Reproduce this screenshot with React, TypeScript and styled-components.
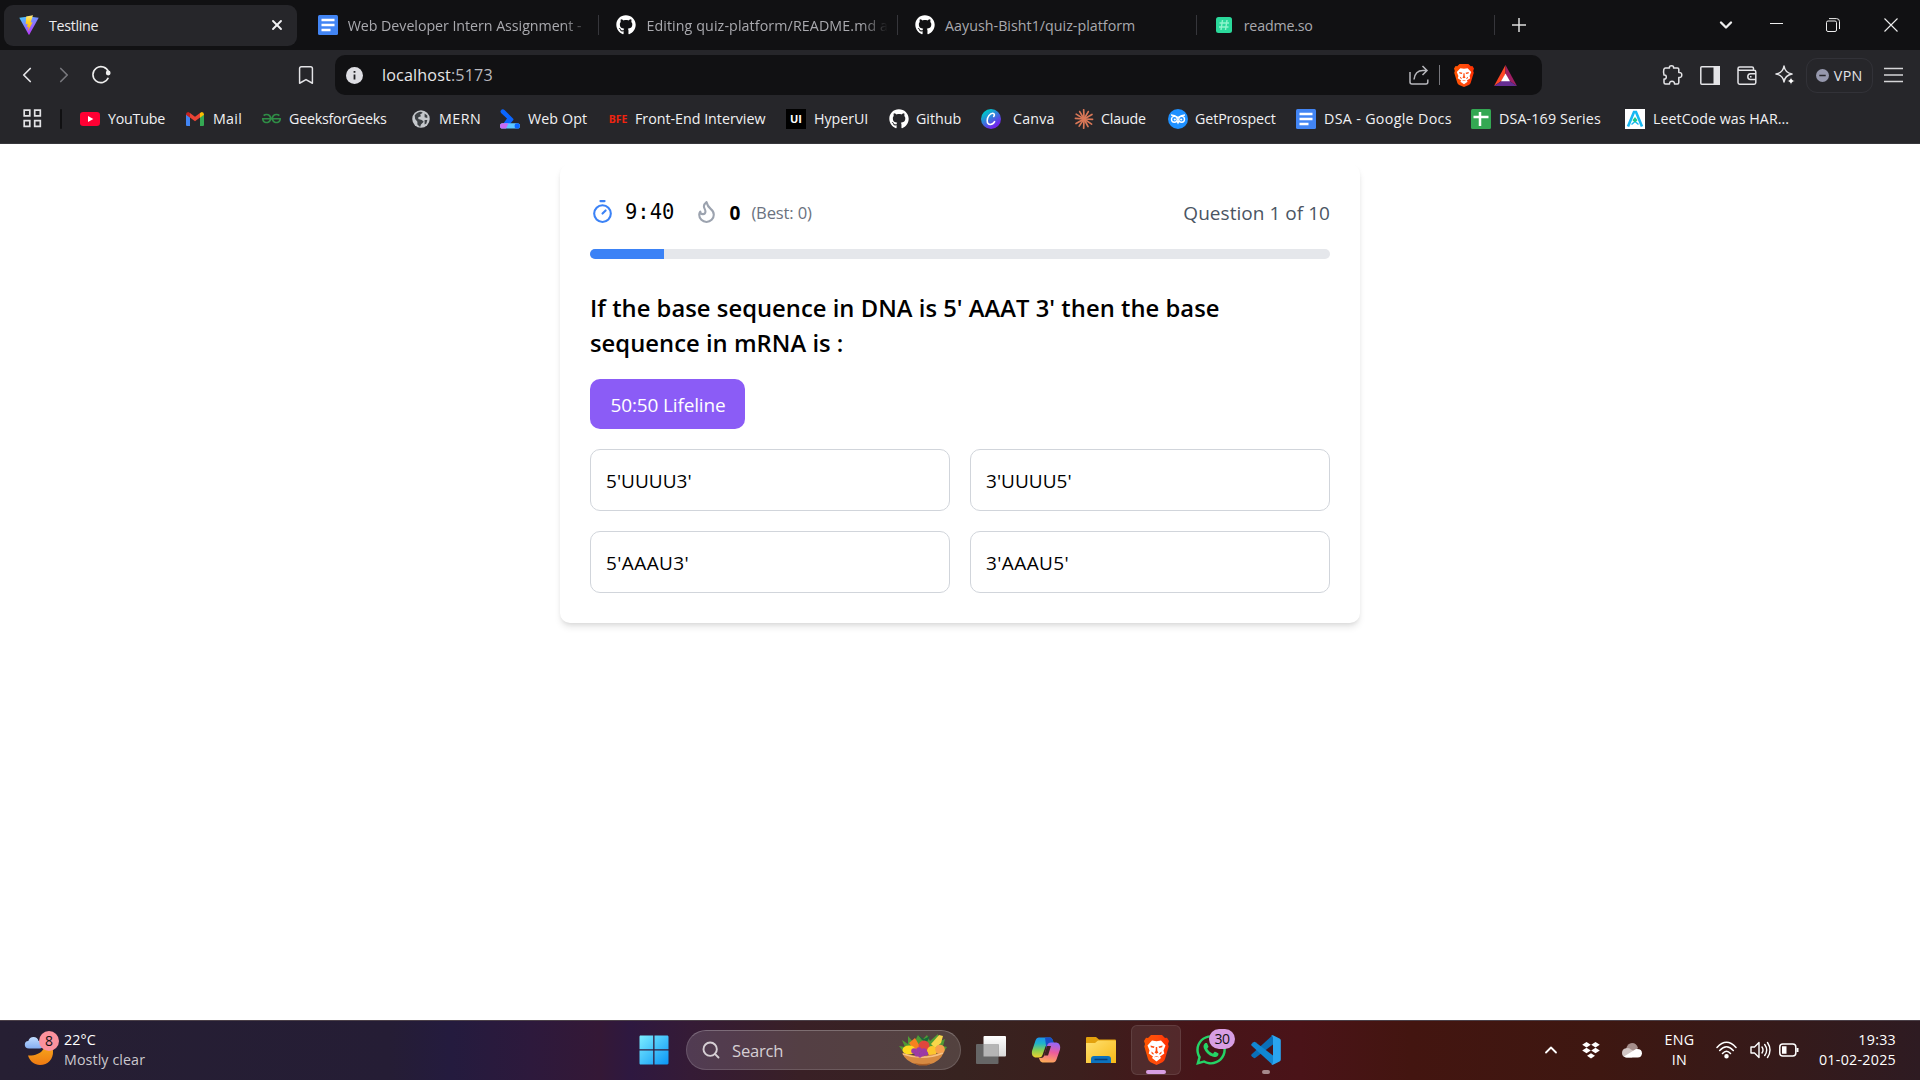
import React from 'react';
import styled, { createGlobalStyle } from 'styled-components';
import { Timer, Flame, Bookmark as BookmarkIcon, ChevronLeft, ChevronRight, ChevronUp, ChevronDown, Search, X } from 'lucide-react';
import { FaGithub, FaWhatsapp } from 'react-icons/fa';
import { SiGeeksforgeeks } from 'react-icons/si';

const GlobalStyle = createGlobalStyle`
  * { box-sizing: border-box; }
  body { margin: 0; background: #fff; overflow: hidden; font-family: "Open Sans", "Noto Sans", sans-serif; }
`;

const Screen = styled.div`
  width: 1920px;
  height: 1080px;
  display: flex;
  flex-direction: column;
`;

/* ---------- Browser tabs ---------- */
const TabStrip = styled.div`
  height: 50px;
  background: #111113;
  display: flex;
  align-items: center;
`;
const TabCell = styled.div`
  width: 298.7px;
  flex: none;
  height: 50px;
  padding: 5px 0 5px 4px;
  display: flex;
  align-items: center;
`;
const TabBody = styled.div<{ $active?: boolean }>`
  flex: none;
  width: 293px;
  height: 41px;
  border-radius: 9px;
  background: ${p => (p.$active ? '#26262a' : 'transparent')};
  display: flex;
  align-items: center;
  padding-left: 15px;
`;
const TabTitle = styled.div<{ $active?: boolean; $track: number; $fade?: boolean }>`
  width: ${p => (p.$active ? 220 : 242)}px;
  margin-left: 10px;
  padding-top: 1px;
  white-space: nowrap;
  font-size: 14.25px;
  line-height: 24px;
  letter-spacing: ${p => p.$track}px;
  color: ${p => (p.$active ? '#ececee' : '#a9a9ae')};
  ${p => p.$fade && 'mask-image: linear-gradient(90deg, #000 215px, transparent 242px);'}
`;
const TabRule = styled.div<{ $hidden?: boolean }>`
  flex: none;
  width: 1px;
  height: 20px;
  margin-left: 2.5px;
  background: ${p => (p.$hidden ? 'transparent' : '#36363b')};
`;
const WindowControls = styled.div`
  flex: 1;
  display: grid;
  grid-template-columns: 51px 156px 51px 52px 59px 57px;
  align-items: center;
  justify-items: center;
  color: #eee;
  svg { display: block; }
`;

/* ---------- Toolbar ---------- */
const Toolbar = styled.div`
  height: 50px;
  background: #26262a;
  display: flex;
  align-items: center;
  color: #e4e4e7;
`;
const NavButtons = styled.div`
  width: 335px;
  flex: none;
  display: grid;
  grid-template-columns: 37px 37px 37px 1fr 22px 18px;
  padding-left: 8px;
  align-items: center;
  justify-items: center;
`;
const AddressBar = styled.div`
  width: 1207px;
  flex: none;
  height: 40px;
  border-radius: 10px;
  background: #111113;
  display: flex;
  align-items: center;
  padding: 0 25px 0 11px;
`;
const Address = styled.div`
  flex: 1;
  margin-left: 19px;
  font-size: 16.15px;
  letter-spacing: 0.15px;
  color: #e6e6e8;
  span { color: #b9b9be; }
`;
const AddressRule = styled.div`
  width: 1px;
  height: 20px;
  margin: 0 14px 0 10px;
  background: #77777c;
`;
const ShieldGap = styled.div`
  width: 20px;
`;
const Extensions = styled.div`
  flex: 1;
  display: flex;
  align-items: center;
  padding-left: 120px;
`;
const ExtensionSlot = styled.div`
  width: 37.7px;
  display: flex;
  svg { display: block; }
`;
const VpnButton = styled.div`
  width: 67px;
  height: 35px;
  margin: 0 11px 0 -7px;
  border: 1px solid #323238;
  border-radius: 11px;
  display: flex;
  align-items: center;
  gap: 5px;
  padding-left: 9px;
  font-size: 14.25px;
  letter-spacing: 0.4px;
`;

/* ---------- Bookmarks ---------- */
const BookmarkBar = styled.div`
  height: 44px;
  background: #26262a;
  border-bottom: 1px solid #36363b;
  display: flex;
  align-items: center;
  padding: 0 0 6px 23px;
`;
const BookmarkRule = styled.div`
  width: 2px;
  height: 20px;
  margin: 0 18px;
  border-radius: 1px;
  background: #101012;
`;
const BookmarkItem = styled.div<{ $width: number; $gap?: number; $track: number }>`
  width: ${p => p.$width}px;
  flex: none;
  display: flex;
  align-items: center;
  gap: ${p => p.$gap ?? 7}px;
  font-size: 14.25px;
  line-height: 24px;
  letter-spacing: ${p => p.$track}px;
  white-space: nowrap;
  color: #f1f1f3;
`;
const IconBox = styled.div`
  width: 20px;
  height: 20px;
  flex: none;
  display: flex;
  align-items: center;
  justify-content: center;
  color: #fff;
`;
const TextMark = styled.div<{ $bg: string; $fg: string; $size: number }>`
  width: 20px;
  height: 20px;
  flex: none;
  display: flex;
  align-items: center;
  justify-content: center;
  background: ${p => p.$bg};
  color: ${p => p.$fg};
  font: 700 ${p => p.$size}px/20px "Open Sans", sans-serif;
  letter-spacing: 0;
`;

/* ---------- Quiz page ---------- */
const Page = styled.main`
  flex: 1;
  background: #fff;
  padding-top: 20px;
  display: flex;
  justify-content: center;
  align-items: flex-start;
`;
const Card = styled.section`
  width: 800px;
  padding: 30px;
  border-radius: 10px;
  background: #fff;
  box-shadow: 0 5px 7.5px -1.25px rgba(0, 0, 0, 0.1), 0 2.5px 5px -2.5px rgba(0, 0, 0, 0.1);
`;
const CardHeader = styled.div`
  height: 35px;
  display: flex;
  justify-content: space-between;
  align-items: center;
`;
const Stats = styled.div`
  display: flex;
  gap: 19px;
`;
const Stat = styled.div`
  display: flex;
  align-items: center;
  gap: 10px;
`;
const Clock = styled.span`
  width: 49.5px;
  font: 20.5px/28px "DejaVu Sans Mono", monospace;
  color: #000;
`;
const Streak = styled.span`
  padding: 2px 0 0 1px;
  font-size: 19px;
  line-height: 30px;
  font-weight: 700;
`;
const Best = styled.span`
  padding: 2px 0 0 1px;
  font-size: 16.6px;
  line-height: 25px;
  letter-spacing: -0.16px;
  color: #6b7280;
`;
const Counter = styled.span`
  padding-top: 2px;
  font-size: 19px;
  line-height: 30px;
  letter-spacing: 0.04px;
  color: #4b5563;
`;
const Progress = styled.div`
  height: 10px;
  margin: 20px 0 30px;
  border-radius: 5px;
  background: #e5e7eb;
  overflow: hidden;
`;
const ProgressFill = styled.div`
  width: 10%;
  height: 100%;
  background: #3b82f6;
`;
const Question = styled.h2`
  margin: 0 0 18px;
  padding-top: 2px;
  font-size: 23.75px;
  line-height: 35px;
  font-weight: 600;
  letter-spacing: 0.04px;
  color: #000;
`;
const Lifeline = styled.button`
  width: 155px;
  height: 50px;
  margin-bottom: 20px;
  padding: 2px 0 0 1px;
  display: block;
  border: 0;
  border-radius: 10px;
  background: #8b5cf6;
  color: #fff;
  font: 19px/30px "Open Sans", sans-serif;
  letter-spacing: -0.14px;
`;
const Options = styled.div`
  display: grid;
  grid-template-columns: 1fr 1fr;
  gap: 20px;
`;
const Option = styled.button<{ $track: number }>`
  height: 62px;
  padding: 2px 15px 0;
  border: 1px solid #d1d5db;
  border-radius: 10px;
  background: #fff;
  color: #000;
  text-align: left;
  font: 19px/30px "Open Sans", sans-serif;
  letter-spacing: ${p => p.$track}px;
`;

/* ---------- Taskbar ---------- */
const Taskbar = styled.footer`
  height: 60px;
  padding-bottom: 1px;
  border-top: 1px solid #4b4048;
  background: linear-gradient(90deg, #261f33 0, #251d35 390px, #241b3e 450px, #2d193c 530px, #341836 600px, #2e1840 630px, #351b36 690px, #392026 800px, #372320 960px, #3c1f1d 1080px, #471519 1200px, #4a1318 1300px, #431510 1410px, #3e1711 1600px, #351a1a 1780px, #2e1b22 1920px);
  display: grid;
  grid-template-columns: 629px 1fr auto;
  align-items: center;
`;
const Weather = styled.div`
  display: flex;
  align-items: center;
  padding-left: 24px;
  gap: 4px;
`;
const TwoLines = styled.div<{ $align?: string; $track?: number; $muted?: boolean }>`
  display: flex;
  flex-direction: column;
  padding-bottom: 1px;
  font-size: 14.25px;
  line-height: 20px;
  letter-spacing: ${p => p.$track ?? 0}px;
  text-align: ${p => p.$align ?? 'left'};
  color: #fff;
  span:last-child { color: ${p => (p.$muted ? '#cbc8ce' : '#fff')}; }
`;
const Apps = styled.div`
  display: flex;
  align-items: center;
`;
const AppSlot = styled.div<{ $active?: boolean }>`
  position: relative;
  width: 50px;
  height: 50px;
  margin-right: 5px;
  border-radius: 6px;
  border: 1px solid ${p => (p.$active ? 'rgba(255,255,255,.09)' : 'transparent')};
  background: ${p => (p.$active ? 'rgba(255,255,255,.08)' : 'transparent')};
  display: flex;
  align-items: center;
  justify-content: center;
`;
const RunningMark = styled.i<{ $wide?: boolean }>`
  position: absolute;
  bottom: 0;
  width: ${p => (p.$wide ? 20 : 8)}px;
  height: 4px;
  border-radius: 2px;
  background: ${p => (p.$wide ? '#d89ee3' : '#a6898c')};
`;
const CountBadge = styled.b`
  position: absolute;
  left: 22px;
  top: 3px;
  width: 26px;
  height: 20px;
  border-radius: 10px;
  background: #d89ee3;
  color: #111;
  font: 14px/20px "Open Sans", sans-serif;
  letter-spacing: -0.6px;
  text-align: center;
`;
const SearchBox = styled.div`
  width: 275px;
  height: 40px;
  margin: 0 5px 0 2px;
  padding: 0 12px 0 14px;
  border-radius: 20px;
  border: 1px solid rgba(255, 255, 255, 0.14);
  border-top-color: rgba(255, 255, 255, 0.24);
  background: rgba(255, 255, 255, 0.14);
  display: flex;
  align-items: center;
  color: #d6cfd4;
  font-size: 16.6px;
  letter-spacing: -0.22px;
`;
const SearchText = styled.span`
  flex: 1;
  margin-left: 11px;
`;
const Tray = styled.div`
  display: grid;
  grid-template-columns: 40px 40px 41px 55px 39px 28px 30px 92px;
  align-items: center;
  justify-items: center;
  padding-right: 24px;
  color: #fff;
  svg { display: block; }
`;
const ClockText = styled.div`
  justify-self: end;
`;

/* ---------- Icons ---------- */
const ViteIcon = () => (
  <svg width="20" height="20" viewBox="0 0 20 20">
    <defs>
      <linearGradient id="vg" x1="0" y1="0" x2=".5" y2="1"><stop stopColor="#41d1ff" /><stop offset="1" stopColor="#bd34fe" /></linearGradient>
      <linearGradient id="vy" x1="0" y1="0" x2="0" y2="1"><stop stopColor="#ffea83" /><stop offset=".4" stopColor="#ffd020" /><stop offset="1" stopColor="#ffa800" /></linearGradient>
    </defs>
    <path d="M.3 2.7 9.8 1.6 19.7 2.7 10.4 19.6Q10 20.2 9.6 19.6Z" fill="url(#vg)" />
    <path d="M14 .2 7.2 1.5 6.7 9.2 8.7 8.8 8 12.2 9.7 11.8 8.8 16.5 13.6 7.2 11.6 7.5Z" fill="url(#vy)" />
  </svg>
);
const DocsIcon = () => (
  <svg width="20" height="20" viewBox="0 0 20 20"><rect width="20" height="20" rx="1.5" fill="#4285f4" /><path d="M3.5 5h13M3.5 10h13M3.5 15h9" stroke="#fff" strokeWidth="2.4" /></svg>
);
const SheetsIcon = () => (
  <svg width="20" height="20" viewBox="0 0 20 20"><rect width="20" height="20" rx="1.5" fill="#34a853" /><path d="M2.5 8h15M9 3v14" stroke="#fff" strokeWidth="2.5" /></svg>
);
const ReadmeIcon = () => (
  <svg width="16" height="16" viewBox="0 0 16 16"><rect width="16" height="16" rx="2.5" fill="#2bd99b" /><path d="M6.5 3 5 13M11 3 9.5 13M3.5 6H13M3 10h9.5" stroke="#8ff5cd" strokeWidth="1.4" /></svg>
);
const YoutubeIcon = () => (
  <svg width="20" height="20" viewBox="0 0 20 20"><rect y="3" width="20" height="14" rx="3.2" fill="#ff0033" /><path d="m8 7 5.3 3L8 13Z" fill="#fff" /></svg>
);
const MailIcon = () => (
  <svg width="20" height="20" viewBox="0 0 20 20">
    <path d="M1 5v11q0 1 1 1h3V8Z" fill="#4285f4" /><path d="M19 5v11q0 1-1 1h-3V8Z" fill="#34a853" />
    <path d="M5 8.500V4l5 3.800L15 4v4.500l-5 3.800Z" fill="#ea4335" /><path d="M1 5.500Q1 3 3.200 3L5 4v4.700L1 5.800Z" fill="#c5221f" /><path d="M19 5.500Q19 3 16.800 3L15 4v4.700l4-2.900Z" fill="#fbbc04" />
  </svg>
);
const GlobeIcon = () => (
  <svg width="18" height="18" viewBox="0 0 20 20"><circle cx="10" cy="10" r="9.7" fill="#c4c7cb" /><path d="M3 6q3-4 7-4l2 1-3 2 1 2-3 1v2l4 1 2 2-3 3-1 3-3-3V13L3.500 10ZM14 4l3 2v3l-3-1ZM14 11l3 0-1 4-2 1Z" fill="#3c4044" /></svg>
);
const WebOptIcon = () => (
  <svg width="20" height="20" viewBox="0 0 20 20"><path d="M.8 1.500Q2.500-1 4.800 1.200L13 9.500q1 1 0 2L10 15H3l4-5.500L1.300 4.300Q0 3 .8 1.500Z" fill="#0b66ff" /><rect x="0" y="14.300" width="20" height="5.200" rx="2.600" fill="#5ec8ff" /><path d="M2.500 14.300h6l-2.500 5.200H2.500Q0 19.500 0 16.900t2.500-2.600Z" fill="#c86af5" /><circle cx="17.200" cy="16.900" r="2.600" fill="#0b66ff" /></svg>
);
const CanvaIcon = () => (
  <svg width="20" height="20" viewBox="0 0 20 20"><defs><linearGradient id="cv" x1=".1" y1="0" x2=".8" y2="1"><stop offset=".15" stopColor="#00c4cc" /><stop offset=".85" stopColor="#7027eb" /></linearGradient></defs><circle cx="10" cy="10" r="10" fill="url(#cv)" /><path d="M12.700 7.500c1.300-1.600.6-3.200-1-3.200-2.800 0-5.500 3.800-5.500 7.200 0 2.600 1.300 4 3.100 4 2 0 3.400-1.300 4.300-2.900" fill="none" stroke="#fff" strokeWidth="1.600" strokeLinecap="round" /></svg>
);
const ClaudeIcon = () => (
  <svg width="20" height="20" viewBox="-10 -10 20 20">
    {[2, 34, 62, 92, 124, 150, 184, 212, 240, 268, 300, 330].map((a, i) => <path key={a} d={`M0 0H${i % 2 ? 9.2 : 8.6}`} transform={`rotate(${a})`} stroke="#d97757" strokeWidth="1.7" strokeLinecap="round" />)}
  </svg>
);
const ProspectIcon = () => (
  <svg width="20" height="20" viewBox="0 0 20 20"><circle cx="10" cy="10" r="10" fill="#1e90ff" /><g fill="none" stroke="#fff" strokeWidth="1.400"><circle cx="6.400" cy="10.300" r="2.900" /><circle cx="13.600" cy="10.300" r="2.900" /><path d="M3 6q3.500 0 7 2.500Q13.500 6 17 6M9 12l1 2 1-2" /></g><circle cx="6.800" cy="10.500" r="1.100" fill="#fff" /><circle cx="13.200" cy="10.500" r="1.100" fill="#fff" /></svg>
);
const AlgoIcon = () => (
  <svg width="20" height="20" viewBox="0 0 20 20"><rect width="20" height="20" fill="#fff" /><path d="M3 17.500 9 3h2l6 14.500" fill="none" stroke="#16b8f3" strokeWidth="2.600" /><path d="m6.500 15.500 3.500-3 3.500 3" fill="none" stroke="#16b8f3" strokeWidth="1.400" /><path d="m10 8 2.500 3.200L10 13.500l-2.500-2.300Z" fill="#18c98b" /></svg>
);
const AppsIcon = () => (
  <svg width="19" height="19" viewBox="0 0 19 19" fill="none" stroke="#e2e2e5" strokeWidth="1.700"><path d="M1.200 1.200h5.600v5.600H1.200ZM11.700 1.200h5.600v5.600h-5.600ZM1.200 11.700h5.600v5.600H1.200ZM11.700 11.700h5.600v5.600h-5.600Z" /></svg>
);
const ReloadIcon = () => (
  <svg width="20" height="20" viewBox="0 0 20 20"><path d="M17.300 12.800A8 8 0 1 1 17.500 7" fill="none" stroke="#eee" strokeWidth="1.600" /><circle cx="17.200" cy="8" r="2.400" fill="#eee" /></svg>
);
const InfoIcon = () => (
  <svg width="17" height="17" viewBox="0 0 17 17"><circle cx="8.500" cy="8.500" r="8.500" fill="#dedee3" /><path d="M8.500 7.500v5M8.500 4v1.700" stroke="#202024" strokeWidth="1.800" /></svg>
);
const ShareIcon = () => (
  <svg width="20" height="20" viewBox="0 0 20 20" fill="none" stroke="#b7b7bc" strokeWidth="1.500"><path d="M1 7v10q0 2 2 2h14q1.800 0 1.800-2v-2.500M5 14.500Q6 5.500 14 5.500h3.500M13.500 1l4.500 4.500-4.500 4.500" /></svg>
);
const LionWrap = styled.div<{ $w: number; $h: number }>`
  width: ${p => p.$w}px;
  height: ${p => p.$h}px;
  svg { width: 100%; height: 100%; display: block; }
`;
const Lion = ({ w, h }: { w: number; h: number }) => (
  <LionWrap $w={w} $h={h}>
    <svg viewBox="0 0 25 30" preserveAspectRatio="none">
      <defs><linearGradient id="br" x1="0" x2="1"><stop stopColor="#ff5500" /><stop offset=".55" stopColor="#ff4a0d" /><stop offset="1" stopColor="#ff2d00" /></linearGradient></defs>
      <path d="M7 0h11l3 3 2-.3 2 3.300-1 3 .7 2.500L21 24q-.5 2-2.500 3.300L12.500 30l-6-2.700Q4.500 26 4 24L.3 11.500 1 9 0 6l2-3.300L4 3Z" fill="url(#br)" />
      <path d="M8 5.500 12.500 6.200 17 5.500 21.500 10.500 19.500 15.500l.8 3-4.300 3 1 1.500-4.500 3.500L8 23l1-1.500-4.300-3 .8-3L3.500 10.500Z" fill="#fff" />
      <path d="m6.500 10.500 4 1-.7 1.400-3-.6ZM18.500 10.500l-4 1 .7 1.400 3-.6ZM11.800 12h1.400l.2 4 1 1.500-1.900 1.200-1.900-1.200 1-1.500ZM7.500 16.500l2.300 2-.5 1.200-1.800-1.500ZM17.500 16.500l-2.300 2 .5 1.200 1.800-1.500ZM9.700 22.200l2.800-1.300 2.800 1.300-2.800-.4Z" fill="#ff4a0d" />
    </svg>
  </LionWrap>
);
const BatIcon = () => (
  <svg width="23" height="21" viewBox="0 0 23 21"><path d="M11.500 0 0 21l7.500-5L11.500 9Z" fill="#ff4724" /><path d="M11.500 0 23 21l-7.500-5-4-7Z" fill="#9e1f63" /><path d="M0 21h23l-7.500-5h-8Z" fill="#662d91" /><path d="m11.500 8.500 4.500 7.700H7Z" fill="#fff" /></svg>
);
const PuzzleIcon = () => (
  <svg width="21" height="20" viewBox="0 0 21 20" fill="none" stroke="#e4e4e7" strokeWidth="1.500" strokeLinejoin="round"><path d="M3.500 3h4q-.5-2.200 2-2.200T11.500 3h4q1.300 0 1.300 1.300v3.200q3-.2 3 2.500t-3 2.500v5q0 1.500-1.300 1.500h-3q.2-2.800-2.500-2.800T7.500 19h-4q-1.500 0-1.500-1.500V14q2.300.2 2.300-2T2 10q-.8-3.200-.2-5.500Q2.200 3 3.500 3Z" /></svg>
);
const PanelIcon = () => (
  <svg width="20" height="19" viewBox="0 0 20 19"><rect x=".8" y=".8" width="18.400" height="17.400" rx="1" fill="none" stroke="#e4e4e7" strokeWidth="1.500" /><path d="M13.500 0H20v19h-6.500Z" fill="#e4e4e7" /></svg>
);
const WalletIcon = () => (
  <svg width="20" height="19" viewBox="0 0 20 19" fill="none" stroke="#e4e4e7" strokeWidth="1.500"><path d="M1 2.800v13.700q0 1.700 1.700 1.700h14.500q1.600 0 1.600-1.700V6q0-1.700-1.600-1.700H2.500Q1 4.300 1 2.500 1 1 2.700 1H15q1.500 0 1.500 1.500v1.700M19 7.800h-5.500Q10.800 8 10.800 10.700t2.700 2.800H19M13 10.700h1.500" /></svg>
);
const SparkleIcon = () => (
  <svg width="20" height="20" viewBox="0 0 20 20"><path d="M9 1q1 6.800 8 8-7 1.200-8 8-1-6.800-8-8 7-1.200 8-8Z" fill="none" stroke="#e4e4e7" strokeWidth="1.500" strokeLinejoin="round" /><path d="M16 12q.5 3.400 4 4-3.500.6-4 4-.5-3.400-4-4 3.500-.6 4-4Z" fill="#fff" stroke="#26262a" strokeWidth=".6" /></svg>
);
const VpnDot = () => (
  <svg width="13" height="13" viewBox="0 0 13 13"><circle cx="6.500" cy="6.500" r="6.500" fill="#9698ad" /><path d="M3.300 6.500h6.400" stroke="#26262a" strokeWidth="1.500" /></svg>
);
const MenuIcon = () => (
  <svg width="19" height="16" viewBox="0 0 19 16"><path d="M0 1.500h19M0 8h19M0 14.500h19" stroke="#d5d5d8" strokeWidth="1.600" /></svg>
);
const PlusIcon = () => <svg width="14" height="14" viewBox="0 0 14 14"><path d="M7 0v14M0 7h14" stroke="#ddd" strokeWidth="1.500" /></svg>;
const MinimizeIcon = () => <svg width="14" height="14" viewBox="0 0 14 14"><path d="M0 5.500h13" stroke="#eee" /></svg>;
const RestoreIcon = () => <svg width="14" height="14" viewBox="0 0 14 14" fill="none" stroke="#eee"><rect x=".5" y="3" width="10" height="10.500" rx="1.500" /><path d="M3 .6h7.500q3 0 3 3V11" /></svg>;
const CloseIcon = () => <svg width="14" height="14" viewBox="0 0 14 14"><path d="m.5.5 13 13M13.500.5l-13 13" stroke="#eee" strokeWidth="1.100" /></svg>;

const WeatherArt = styled.div`
  position: relative;
  height: 36px;
  svg { display: block; }
`;
const AlertBadge = styled.b`
  position: absolute;
  left: 15px;
  top: -1px;
  width: 20px;
  height: 20px;
  border-radius: 10px;
  background: #fb929d;
  color: #111;
  font: 14px/20px "Open Sans", sans-serif;
  text-align: center;
`;
const WeatherIcon = () => (
  <WeatherArt>
    <svg width="36" height="36" viewBox="0 0 36 36">
      <defs><linearGradient id="mn" x1="0" y1="0" x2="0" y2="1"><stop stopColor="#f8b51f" /><stop offset="1" stopColor="#ef7a12" /></linearGradient><linearGradient id="cl" x1="0" y1="0" x2="0" y2="1"><stop stopColor="#c0dcff" /><stop offset="1" stopColor="#85aef2" /></linearGradient></defs>
      <path d="M20 8c3 7-2 16-16 15.500C6 29.500 10.500 33 16 33c8 0 13.500-6 13-14C28.500 12 25 9 20 8Z" fill="url(#mn)" />
      <path d="M5 16.500q-4.200-.3-4.200-3.800t3.500-3.700Q5.500 5 9.500 5t5 4q4.500-.2 4.500 3.800t-4 3.700Z" fill="url(#cl)" />
    </svg>
    <AlertBadge>8</AlertBadge>
  </WeatherArt>
);
const WindowsIcon = () => (
  <svg width="30" height="30" viewBox="0 0 30 30"><defs><linearGradient id="wn" x1="0" y1="0" x2="1" y2="1"><stop stopColor="#7ceeff" /><stop offset="1" stopColor="#0a95f5" /></linearGradient></defs><path d="M1 .5h13.200v13.700H.5V1.500ZM15.500.5h13.200l.8 1v12.700h-14ZM.5 15.500h13.700v14H1l-.5-1ZM15.500 15.500h14v13l-1 1h-13Z" fill="url(#wn)" /></svg>
);
const BasketIcon = () => (
  <svg width="50" height="32" viewBox="0 0 50 32">
    <path d="M1 12l6 1L4 6l6 4 0-8 6 7 4-8 4 5 5-5 3 6 8-7 0 8 7-3-2 7 4 1-4 6-38 1Z" fill="#4f9a35" />
    <path d="M20 1l6 4 6-3-4 8Z" fill="#17693a" /><path d="M11 9l6-5 7 12-5 4Z" fill="#f58220" />
    <path d="M33 10l8-9 4 1-2 7-6 5Z" fill="#f7d64a" />
    <circle cx="26" cy="12" r="5.500" fill="#e0473c" /><ellipse cx="11" cy="16" rx="6.500" ry="4.500" fill="#ffd91f" /><circle cx="34" cy="17" r="5" fill="#fcc52d" /><circle cx="42" cy="15.500" r="4.800" fill="#f6a04c" />
    <path d="M4 19q17 6 42-1-4 10-15 12.500H19Q8 28 4 19Z" fill="#d78a42" /><path d="M5 20q20 7 40-1" stroke="#f6c184" strokeWidth="1.600" fill="none" />
    <g fill="#9d3aa5"><circle cx="16" cy="17" r="2.800" /><circle cx="21" cy="16" r="2.800" /><circle cx="26" cy="17" r="2.800" /><circle cx="19" cy="20" r="2.600" /><circle cx="24" cy="20" r="2.600" /><circle cx="28" cy="19.500" r="2.200" /><circle cx="22" cy="22" r="1.800" /></g>
    <path d="M16 29q9 2 17 0l-4 2.500h-8Z" fill="#a95e26" />
  </svg>
);
const TaskViewIcon = () => (
  <svg width="30" height="30" viewBox="0 0 30 30"><defs><linearGradient id="tv" x1="0" y1="0" x2="0" y2="1"><stop stopColor="#fff" /><stop offset="1" stopColor="#d9d9d9" /></linearGradient></defs><rect x="7.500" y="1" width="22.500" height="20.500" rx="1" fill="url(#tv)" /><rect y="9" width="22.500" height="20" rx="1" fill="#666" /><path d="M7.500 9h15v12.500h-15Z" fill="#b5b5b5" /></svg>
);
const CopilotIcon = () => (
  <svg width="30" height="30" viewBox="0 0 30 30">
    <defs>
      <linearGradient id="c1" x1="0" y1="0" x2="0" y2="1"><stop stopColor="#1b93ee" /><stop offset=".3" stopColor="#21b3c8" /><stop offset=".65" stopColor="#8bcf4f" /><stop offset="1" stopColor="#f2d12f" /></linearGradient>
      <linearGradient id="c2" x1=".5" y1="0" x2=".3" y2="1"><stop stopColor="#9a66f5" /><stop offset=".45" stopColor="#ec5c9c" /><stop offset="1" stopColor="#ffae55" /></linearGradient>
    </defs>
    <path d="M8 2.500h11q2.200.3 3.200 4l1.300 4h-5l-3.800.5-3.200 9q-1 3-3.700 2.500H4Q0 21 1 16L4.500 5.500Q5.500 2.500 8 2.500Z" fill="url(#c1)" />
    <path d="M14 2.500h5q2.200.3 3.200 4l1.300 4h-5q-2.500-.2-3.300 2Z" fill="#194fc9" />
    <path d="M22 27.500H11.500Q9 27 8 23h2q2.500 0 3-2l3.500-11.500Q17.300 7.500 20 7.500h5.500q4.500 1 3.500 7l-3.500 10q-1 3-3.500 3Z" fill="url(#c2)" />
    <path d="M13 20.500h4l3-9.500h-4Z" fill="#3e2021" />
  </svg>
);
const FolderIcon = () => (
  <svg width="30" height="30" viewBox="0 0 30 30"><defs><linearGradient id="fo" x1="0" y1="0" x2="1" y2="1"><stop stopColor="#ffe070" /><stop offset="1" stopColor="#f7b916" /></linearGradient></defs><path d="M0 8V3q0-1 1-1h9l3 2.500h16q1 0 1 1V10H0Z" fill="#e3a10d" /><path d="M0 8h9l3-2.500h17q1 0 1 1V28H0Z" fill="url(#fo)" /><path d="M5 28v-4q0-3 3-3h14q3 0 3 3v4Z" fill="#0d72bd" /><path d="M8.500 24.500h13" stroke="#063e78" strokeWidth="1.500" /></svg>
);
const CodeIcon = () => (
  <svg width="30" height="30" viewBox="0 0 30 30"><path d="M22 .5v9L4.500 22.800q-1 .7-2 0L.7 21.200q-1-1 0-2L21 .8Z" fill="#0a6fb8" /><path d="M22 29.500v-9L4.500 7.200q-1-.7-2 0L.7 8.800q-1 1 0 2L21 29.200Z" fill="#1187d2" /><path d="M22 .3 28.500 3.500q1.300.7 1.300 2v19q0 1.300-1.300 2L22 29.700q-1 .4-2-.6 2 .6 2-2V3q0-2.500-2-2 1-1 2-.7Z" fill="#2aa5f0" /></svg>
);
const DropboxIcon = () => (
  <svg width="18" height="17" viewBox="0 0 18 17" fill="#fff"><path d="m4.500 0 4.300 2.700-4.300 2.800L.2 2.700ZM13.500 0l4.300 2.700-4.300 2.800-4.300-2.800ZM4.500 5.800l4.300 2.700-4.300 2.800L.2 8.500ZM13.500 5.800l4.300 2.700-4.300 2.800-4.300-2.800ZM9 11.300l4 2.500L9 16.500l-4-2.700Z" /></svg>
);
const CloudIcon = () => (
  <svg width="20" height="15" viewBox="0 0 20 15"><path d="M4 6Q5.500 0 10 0t6 5l-5 5Z" fill="#a58e8b" /><path d="M4.500 14.500Q0 14 0 10t4-4.800q3-.5 5 1.300L14 9l-4 5.500Z" fill="#d1c6c4" /><path d="M2 13.500 14 6q6-.5 6 4.300-.3 4.200-4.300 4.200H4.500Q3 14.500 2 13.500Z" fill="#fff" /></svg>
);
const WifiIcon = () => (
  <svg width="21" height="18" viewBox="0 0 21 18" fill="none" stroke="#fff" strokeWidth="1.500" strokeLinecap="round"><path d="M1 6.500Q10.500-4 20 6.500M3.700 9.500q6.800-7.500 13.600 0M6.500 12.500q4-4.500 8 0" /><circle cx="10.500" cy="15.300" r="1.500" fill="#fff" /></svg>
);
const VolumeIcon = () => (
  <svg width="21" height="18" viewBox="0 0 21 18" fill="none" stroke="#fff" strokeWidth="1.400" strokeLinecap="round" strokeLinejoin="round"><path d="M1 6h3.500L9 1.500v15L4.500 12H1ZM12 6q2 3 0 6M14.700 3.500q4 5.500 0 11M17.500 1.500q5 7.500 0 15" /></svg>
);
const BatteryIcon = () => (
  <svg width="20" height="14" viewBox="0 0 20 14"><rect x=".8" y="1" width="16" height="12" rx="3" fill="none" stroke="#fff" strokeWidth="1.500" /><path d="M3 3.300h4.500v7.400H3ZM17.500 5h2v4h-2Z" fill="#fff" /></svg>
);

const tabs = [
  { title: 'Testline', icon: <ViteIcon />, active: true, track: -0.32 },
  { title: 'Web Developer Intern Assignment -', icon: <DocsIcon />, track: -0.05, fade: true },
  { title: 'Editing quiz-platform/README.md a', icon: <FaGithub size={20} />, track: 0.1, fade: true },
  { title: 'Aayush-Bisht1/quiz-platform', icon: <FaGithub size={20} />, track: 0.02 },
  { title: 'readme.so', icon: <ReadmeIcon />, track: -0.2 },
];

const bookmarks = [
  { label: 'YouTube', icon: <YoutubeIcon />, width: 105, gap: 8, track: -0.22 },
  { label: 'Mail', icon: <MailIcon />, width: 76, gap: 8, track: 0.3 },
  { label: 'GeeksforGeeks', icon: <SiGeeksforgeeks size={19} color="#2f8d46" />, width: 150, gap: 8, track: -0.22 },
  { label: 'MERN', icon: <GlobeIcon />, width: 89, gap: 8, track: 0.5 },
  { label: 'Web Opt', icon: <WebOptIcon />, width: 108, gap: 8, track: 0.1 },
  { label: 'Front-End Interview', icon: <TextMark $bg="transparent" $fg="#ef2410" $size={10.5}>BFE</TextMark>, width: 178, gap: 7, track: -0.01 },
  { label: 'HyperUI', icon: <TextMark $bg="#000" $fg="#fff" $size={11}>UI</TextMark>, width: 103, gap: 8, track: -0.04 },
  { label: 'Github', icon: <FaGithub size={20} />, width: 92, track: -0.02 },
  { label: 'Canva', icon: <CanvaIcon />, width: 93, gap: 12, track: 0.19 },
  { label: 'Claude', icon: <ClaudeIcon />, width: 94, track: -0.19 },
  { label: 'GetProspect', icon: <ProspectIcon />, width: 128, track: -0.1 },
  { label: 'DSA - Google Docs', icon: <DocsIcon />, width: 175, gap: 8, track: 0.33 },
  { label: 'DSA-169 Series', icon: <SheetsIcon />, width: 154, gap: 8, track: 0.14 },
  { label: 'LeetCode was HAR...', icon: <AlgoIcon />, width: 180, gap: 8, track: 0.03 },
];

const options = [
  { label: "5'UUUU3'", track: 0.02 },
  { label: "3'UUUU5'", track: 0.02 },
  { label: "5'AAAU3'", track: 0.4 },
  { label: "3'AAAU5'", track: 0.4 },
];

export default function App() {
  return (
    <Screen>
      <GlobalStyle />
      <TabStrip>
        {tabs.map((t, i) => (
          <TabCell key={t.title}>
            <TabBody $active={t.active}>
              <IconBox>{t.icon}</IconBox>
              <TabTitle $active={t.active} $track={t.track} $fade={t.fade}>{t.title}</TabTitle>
              {t.active && <X size={16} color="#f2f2f4" strokeWidth={2.8} />}
            </TabBody>
            <TabRule $hidden={i === 0} />
          </TabCell>
        ))}
        <WindowControls>
          <PlusIcon />
          <span />
          <ChevronDown size={20} strokeWidth={2.8} />
          <MinimizeIcon />
          <RestoreIcon />
          <CloseIcon />
        </WindowControls>
      </TabStrip>

      <Toolbar>
        <NavButtons>
          <ChevronLeft size={26} strokeWidth={1.6} />
          <ChevronRight size={26} strokeWidth={1.6} color="#77777c" />
          <ReloadIcon />
          <span />
          <BookmarkIcon size={22} strokeWidth={1.6} />
        </NavButtons>
        <AddressBar>
          <InfoIcon />
          <Address>localhost<span>:5173</span></Address>
          <ShareIcon />
          <AddressRule />
          <Lion w={20} h={23} />
          <ShieldGap />
          <BatIcon />
        </AddressBar>
        <Extensions>
          <ExtensionSlot><PuzzleIcon /></ExtensionSlot>
          <ExtensionSlot><PanelIcon /></ExtensionSlot>
          <ExtensionSlot><WalletIcon /></ExtensionSlot>
          <ExtensionSlot><SparkleIcon /></ExtensionSlot>
          <VpnButton><VpnDot />VPN</VpnButton>
          <MenuIcon />
        </Extensions>
      </Toolbar>

      <BookmarkBar>
        <AppsIcon />
        <BookmarkRule />
        {bookmarks.map(b => (
          <BookmarkItem key={b.label} $width={b.width} $gap={b.gap} $track={b.track}>
            <IconBox>{b.icon}</IconBox>
            {b.label}
          </BookmarkItem>
        ))}
      </BookmarkBar>

      <Page>
        <Card>
          <CardHeader>
            <Stats>
              <Stat>
                <Timer size={25} color="#3b82f6" />
                <Clock>9:40</Clock>
              </Stat>
              <Stat>
                <Flame size={25} color="#9ca3af" />
                <Streak>0</Streak>
                <Best>(Best: 0)</Best>
              </Stat>
            </Stats>
            <Counter>Question 1 of 10</Counter>
          </CardHeader>
          <Progress><ProgressFill /></Progress>
          <Question>If the base sequence in DNA is 5' AAAT 3' then the base sequence in mRNA is :</Question>
          <Lifeline>50:50 Lifeline</Lifeline>
          <Options>
            {options.map(o => <Option key={o.label} $track={o.track}>{o.label}</Option>)}
          </Options>
        </Card>
      </Page>

      <Taskbar>
        <Weather>
          <WeatherIcon />
          <TwoLines $muted $track={0.1}><span>22°C</span><span>Mostly clear</span></TwoLines>
        </Weather>
        <Apps>
          <AppSlot><WindowsIcon /></AppSlot>
          <SearchBox>
            <Search size={20} strokeWidth={2.3} />
            <SearchText>Search</SearchText>
            <BasketIcon />
          </SearchBox>
          <AppSlot><TaskViewIcon /></AppSlot>
          <AppSlot><CopilotIcon /></AppSlot>
          <AppSlot><FolderIcon /></AppSlot>
          <AppSlot $active><Lion w={25} h={30} /><RunningMark $wide /></AppSlot>
          <AppSlot><FaWhatsapp size={34} color="#25d366" /><CountBadge>30</CountBadge></AppSlot>
          <AppSlot><CodeIcon /><RunningMark /></AppSlot>
        </Apps>
        <Tray>
          <ChevronUp size={20} strokeWidth={2.2} />
          <DropboxIcon />
          <CloudIcon />
          <TwoLines $align="center" $track={0.4}><span>ENG</span><span>IN</span></TwoLines>
          <WifiIcon />
          <VolumeIcon />
          <BatteryIcon />
          <ClockText>
            <TwoLines $align="right" $track={0.27}><span>19:33</span><span>01-02-2025</span></TwoLines>
          </ClockText>
        </Tray>
      </Taskbar>
    </Screen>
  );
}
